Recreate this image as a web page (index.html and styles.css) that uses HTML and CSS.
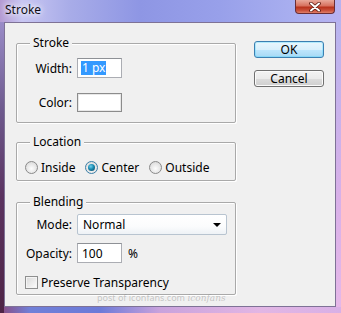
FILE: index.html
```html
<!DOCTYPE html>
<html>
<head>
<meta charset="utf-8">
<link rel="stylesheet" href="styles.css">
</head>
<body>
<div class="window">
  <div class="titlebar">
    <span class="title">Stroke</span>
    <div class="close">
      <svg width="14" height="10" viewBox="0 0 14 10">
        <path d="M3 1.5 L11 8.5 M11 1.5 L3 8.5" stroke="#5a1a10" stroke-width="3.6" stroke-linecap="round"/>
        <path d="M3 1.5 L11 8.5 M11 1.5 L3 8.5" stroke="#ffffff" stroke-width="2" stroke-linecap="round"/>
      </svg>
    </div>
  </div>
  <div class="client">
    <div class="groups">
      <div class="group g-stroke">
        <span class="gtitle">Stroke</span>
        <div class="row r-width">
          <label class="lbl">Width:</label>
          <div class="input small"><span class="sel">1 px</span></div>
        </div>
        <div class="row r-color">
          <label class="lbl">Color:</label>
          <div class="swatch"></div>
        </div>
      </div>
      <div class="group g-loc">
        <span class="gtitle">Location</span>
        <div class="radios">
          <div class="opt"><span class="radio"></span><span>Inside</span></div>
          <div class="opt"><span class="radio on"><span class="dot"></span></span><span>Center</span></div>
          <div class="opt"><span class="radio"></span><span>Outside</span></div>
        </div>
      </div>
      <div class="group g-blend">
        <span class="gtitle">Blending</span>
        <div class="row r-mode">
          <label class="lbl">Mode:</label>
          <div class="select"><span>Normal</span><span class="arrow"></span></div>
        </div>
        <div class="row r-op">
          <label class="lbl">Opacity:</label>
          <div class="input small"><span class="val">100</span></div>
          <span class="pct">%</span>
        </div>
        <div class="row r-check">
          <span class="check"></span><span class="ctext">Preserve Transparency</span>
        </div>
        <span class="wm">post of iconfans.com <i>iconfans</i></span>
      </div>
    </div>
    <div class="buttons">
      <div class="btn ok">OK</div>
      <div class="btn">Cancel</div>
    </div>
  </div>
</div>
</body>
</html>
```

FILE: styles.css
```css
html, body {
  margin: 0;
  padding: 0;
}
body {
  width: 341px;
  height: 313px;
  overflow: hidden;
  font-family: "Noto Sans", "Open Sans", sans-serif;
  font-size: 12px;
  color: #000;
}
.window {
  width: 341px;
  height: 313px;
  display: flex;
  flex-direction: column;
  background:
    linear-gradient(180deg, #9a8cc8 0%, #6e5a8e 30%, #5b3360 60%, #4e2446 100%) 0 22px / 4px 291px no-repeat,
    linear-gradient(90deg, #8a4a80 0px, #7080d8 30px, #6c7ad8 100px, #c9a2dc 160px, #e2b6e4 260px, #d8b0e6 341px) 0 307px / 341px 6px no-repeat,
    linear-gradient(180deg, #b8b4ee 0%, #d8b0e8 60%, #e6b8e8 100%) 336px 22px / 5px 291px no-repeat,
    linear-gradient(90deg, #b49ad2 0px, #c8c6f2 22px, #a8ace8 70px, #8e96e4 140px, #98a0ea 220px, #aab0f0 300px, #b8b2f0 341px);
}
.titlebar {
  height: 22px;
  display: flex;
  align-items: flex-start;
  padding-left: 5px;
  padding-right: 6px;
}
.title {
  line-height: 20px;
  color: #101018;
  text-shadow: 0 0 5px #fff, 0 0 8px #fff;
}
.close {
  margin-left: auto;
  width: 40px;
  height: 14px;
  box-sizing: border-box;
  border: 1px solid #6a2d35;
  border-top: none;
  border-radius: 0 0 4px 4px;
  background: linear-gradient(180deg, #e9a89a 0%, #d7715e 45%, #b8321c 55%, #c9503a 80%, #e0806a 100%);
  display: flex;
  align-items: center;
  justify-content: center;
}
.client {
  margin: 0 5px 6px 4px;
  flex: 1;
  box-sizing: border-box;
  border: 1px solid #7e7296;
  background: #f0f0f0;
  display: flex;
  padding: 18px 0 0 11px;
  gap: 18px;
}
.groups {
  width: 220px;
  padding-top: 2px;
  display: flex;
  flex-direction: column;
}
.group {
  position: relative;
  box-sizing: border-box;
  border: 1px solid #a9a9a9;
  border-radius: 2px;
  box-shadow: inset 1px 1px 0 #ffffff, 1px 1px 0 #ffffff;
}
.gtitle {
  position: absolute;
  top: -9px;
  left: 13px;
  padding: 0 3px;
  line-height: 16px;
  background: #f0f0f0;
}
.g-stroke {
  height: 80px;
  padding-top: 14px;
}
.g-loc {
  height: 39px;
  margin-top: 19px;
  padding-top: 18px;
}
.g-blend {
  height: 93px;
  margin-top: 21px;
  padding-top: 11px;
}
.row {
  display: flex;
  align-items: center;
}
.lbl {
  width: 55px;
  text-align: right;
  margin-right: 5px;
  flex: none;
}
.r-width { height: 20px; }
.r-color { height: 19px; margin-top: 15px; }
.input {
  box-sizing: border-box;
  height: 20px;
  border: 1px solid #abadb3;
  border-top-color: #8e9196;
  background: #fff;
  display: flex;
  align-items: center;
  padding-left: 3px;
}
.small { width: 45px; }
.sel {
  background: #3399ff;
  color: #fff;
  line-height: 14px;
  padding: 0 1px;
}
.swatch {
  box-sizing: border-box;
  width: 45px;
  height: 19px;
  border: 1px solid #8c8c8c;
  background: #fff;
  box-shadow: inset 0 0 0 1px #e8e8e8;
}
.radios {
  display: flex;
  height: 13px;
  align-items: center;
  padding-left: 8px;
  gap: 10px;
}
.opt {
  display: flex;
  align-items: center;
  gap: 3px;
}
.radio {
  box-sizing: border-box;
  width: 13px;
  height: 13px;
  border-radius: 50%;
  border: 1px solid #8a8a8a;
  background: radial-gradient(circle at 50% 60%, #fdfdfd 0%, #e4e4e4 60%, #cfcfcf 100%);
  display: flex;
  align-items: center;
  justify-content: center;
}
.radio.on {
  border-color: #3b7fa8;
}
.dot {
  width: 7px;
  height: 7px;
  border-radius: 50%;
  background: radial-gradient(circle at 40% 35%, #6fd0ee 0%, #1a8ab0 45%, #0a3e5a 100%);
}
.r-mode { height: 21px; }
.select {
  box-sizing: border-box;
  width: 150px;
  height: 21px;
  border: 1px solid #b8c4d0;
  border-radius: 2px;
  background: linear-gradient(180deg, #ffffff 0%, #fbfcfd 60%, #eef2f6 100%);
  display: flex;
  align-items: center;
  padding-left: 5px;
  padding-right: 5px;
}
.arrow {
  margin-left: auto;
  width: 0;
  height: 0;
  border-left: 4px solid transparent;
  border-right: 4px solid transparent;
  border-top: 4px solid #000;
}
.r-op { height: 20px; margin-top: 8px; }
.val { padding-left: 1px; }
.pct { margin-left: 6px; }
.r-check { height: 13px; margin-top: 13px; padding-left: 8px; }
.ctext { line-height: 13px; }
.check {
  box-sizing: border-box;
  width: 13px;
  height: 13px;
  border: 1px solid #8e8f8f;
  background: linear-gradient(135deg, #d8d8d8 0%, #f2f2f2 70%, #ffffff 100%);
  box-shadow: inset 0 0 0 1px #f4f4f4;
  margin-right: 3px;
}
.wm {
  position: absolute;
  left: 80px;
  bottom: -9px;
  font-size: 9px;
  line-height: 10px;
  color: rgba(140, 140, 140, 0.45);
  white-space: nowrap;
}
.wm i {
  font-family: "DejaVu Serif", serif;
}
.buttons {
  display: flex;
  flex-direction: column;
  gap: 12px;
  width: 70px;
}
.btn {
  box-sizing: border-box;
  height: 17px;
  border: 1px solid #707070;
  border-radius: 3px;
  background: linear-gradient(180deg, #f3f3f3 0%, #ebebeb 50%, #dddddd 51%, #cfcfcf 100%);
  box-shadow: inset 0 0 0 1px #fbfbfb;
  text-align: center;
  line-height: 15px;
}
.btn.ok {
  border-color: #3c7fb1;
  background: linear-gradient(180deg, #eaf6fd 0%, #d9f0fc 50%, #bee6fd 51%, #a7d9f5 100%);
  box-shadow: inset 0 0 0 1px #48d6fb55;
}
```
